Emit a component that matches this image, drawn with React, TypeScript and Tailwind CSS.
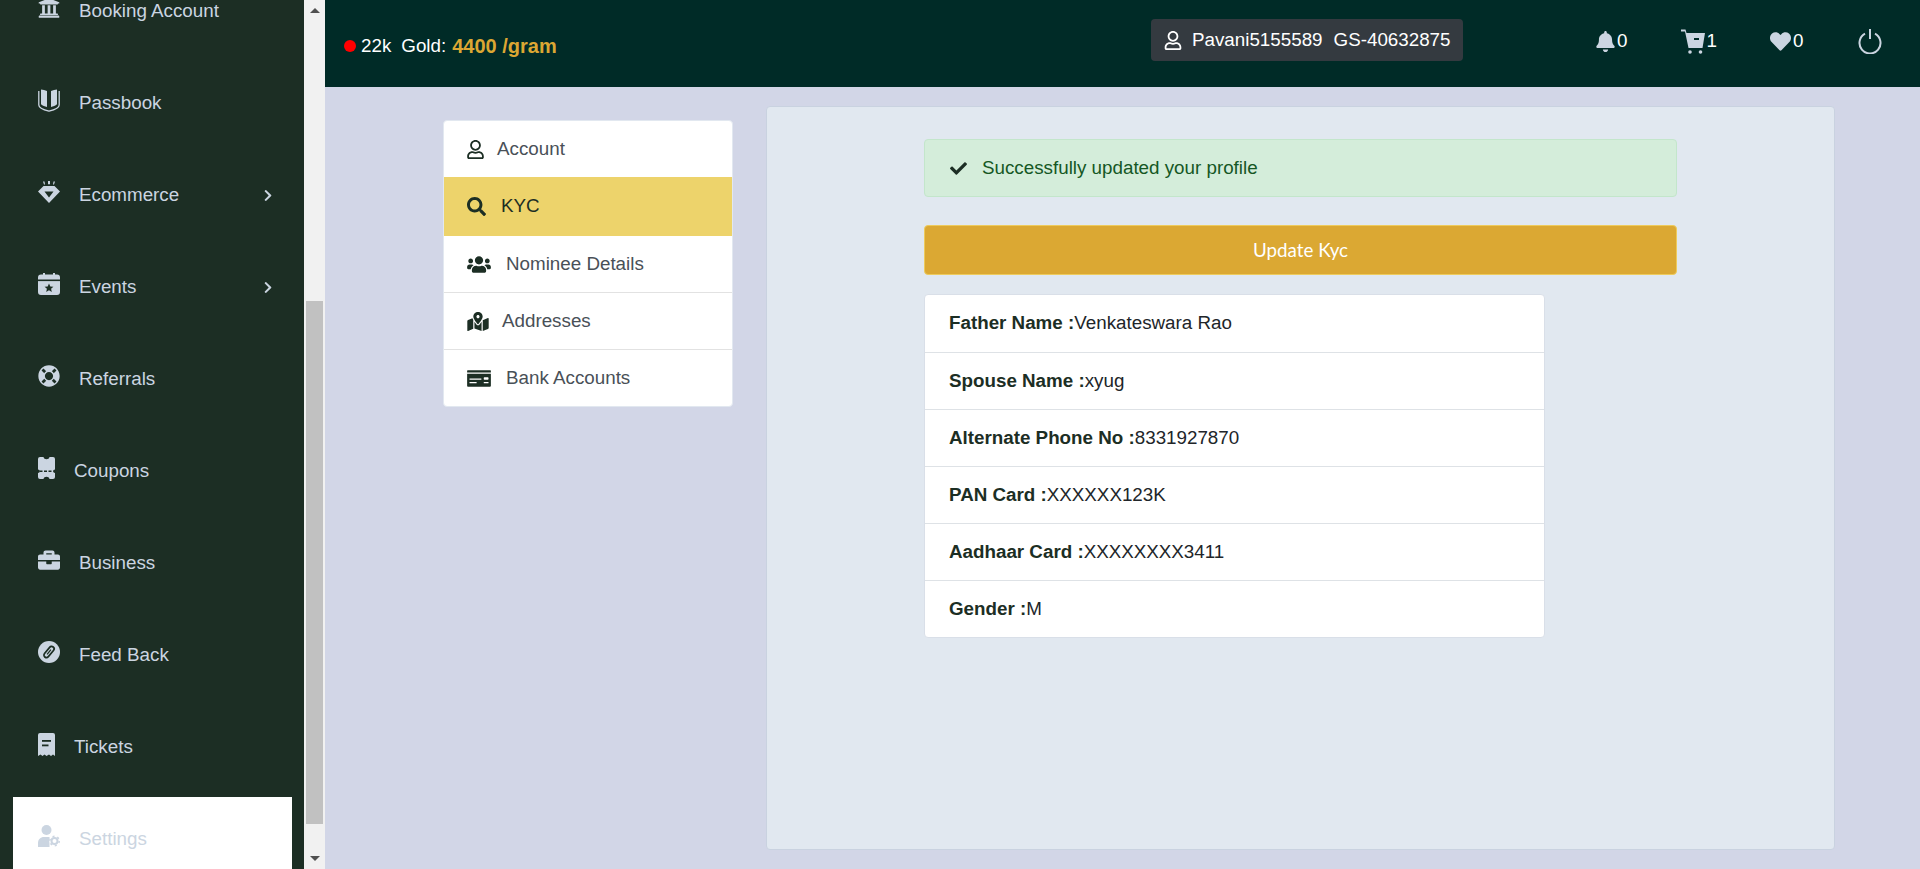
import {
  FaUniversity,
  FaLifeRing,
  FaBriefcase,
  FaChevronRight,
  FaRegUser,
  FaSearch,
  FaUsers,
  FaMapMarkedAlt,
  FaMoneyCheck,
  FaCheck,
  FaBell,
  FaHeart,
} from "react-icons/fa";

type IconProps = { className?: string };

const sidebarBg = "#1c2e24";

function PassbookIcon({ className }: IconProps) {
  return (
    <svg viewBox="0 0 22 23" className={className} fill="currentColor">
      <path d="M0.8 2v14c0 2.6 5 4.9 10.2 6.2C16.2 20.900 21.200 18.600 21.200 16V2" fill="none" stroke="currentColor" strokeWidth="1.300" />
      <path d="M3 0.500c2 0 4 .5 6 1.500v16c-2-.6-4.500-1.500-6-2.800zM19 0.500c-2 0-4 .5-6 1.500v16c2-.6 4.500-1.500 6-2.800z" />
    </svg>
  );
}

function GemIcon({ className }: IconProps) {
  return (
    <svg viewBox="0 0 22 22" className={className} fill="currentColor">
      <path d="M5 0.500l1.500 0 .5 3-1 0zM10 0h2v3.200h-2zM15.500 0.500l1.500 0-1 3-1 0z" />
      <path fillRule="evenodd" d="M5.500 5h11l5.500 5.500L11 22 0 10.500zM6.500 10.500h9L11 16.500z" />
    </svg>
  );
}

function CalendarStarIcon({ className }: IconProps) {
  return (
    <svg viewBox="0 0 22 22" className={className}>
      <path fill="currentColor" d="M3 1.500h2V0h2v1.500h8V0h2v1.500h2a3 3 0 0 1 3 3V19a3 3 0 0 1-3 3H3a3 3 0 0 1-3-3V4.500a3 3 0 0 1 3-3z" />
      <rect x="0" y="6.500" width="22" height="1.600" fill={sidebarBg} />
      <path fill={sidebarBg} d="M11 10.500l1.300 2.900 3.100.3-2.300 2.100.7 3.100-2.800-1.600-2.800 1.600.7-3.100-2.300-2.100 3.100-.3z" />
    </svg>
  );
}

function CouponIcon({ className }: IconProps) {
  return (
    <svg viewBox="0 0 17 22" className={className}>
      <path fill="currentColor" d="M2 0h3.500c.3 1.500 1.500 2.200 3 2.200S11.200 1.500 11.500 0H15a2 2 0 0 1 2 2v10.500a1.800 1.800 0 0 0 0 3.600V20a2 2 0 0 1-2 2h-3.500c-.3-1.500-1.500-2.200-3-2.200S5.800 20.500 5.500 22H2a2 2 0 0 1-2-2v-3.900a1.800 1.800 0 0 0 0-3.600V2a2 2 0 0 1 2-2z" />
      <path stroke={sidebarBg} strokeWidth="1.500" strokeDasharray="3 1.500" d="M1.500 14.300h14" />
    </svg>
  );
}

function FeedbackIcon({ className }: IconProps) {
  return (
    <svg viewBox="0 0 22 22" className={className}>
      <circle cx="11" cy="11" r="11" fill="currentColor" />
      <rect x="8.500" y="4.500" width="5" height="13" rx="2.500" fill="none" stroke={sidebarBg} strokeWidth="1.700" transform="rotate(40 11 11)" />
      <path stroke={sidebarBg} strokeWidth="1.300" d="M11 8v6" transform="rotate(40 11 11)" />
    </svg>
  );
}

function ReceiptIcon({ className }: IconProps) {
  return (
    <svg viewBox="0 0 17 23" className={className}>
      <path fill="currentColor" d="M2 0h13a2 2 0 0 1 2 2v21l-2-1.500-2 1.500-2-1.500-2.500 1.500-2-1.500-2 1.500-2-1.500-2.500 1.500V2a2 2 0 0 1 2-2z" />
      <rect x="4" y="7" width="9" height="1.800" fill={sidebarBg} />
      <rect x="4" y="11.500" width="6.500" height="1.800" fill={sidebarBg} />
    </svg>
  );
}

function UserGearIcon({ className }: IconProps) {
  return (
    <svg viewBox="0 0 22 22" className={className}>
      <circle cx="8.500" cy="5" r="5" fill="currentColor" />
      <path fill="currentColor" d="M0 22v-4c0-3.500 2.500-6 6-6h5.500v10z" />
      <circle cx="16.500" cy="16" r="5" fill="#ffffff" />
      <circle cx="16.500" cy="16" r="3" fill="none" stroke="currentColor" strokeWidth="2" />
      <circle cx="16.500" cy="16" r="4.700" fill="none" stroke="currentColor" strokeWidth="1.500" strokeDasharray="2 2.900" />
    </svg>
  );
}

function CartIcon({ className }: IconProps) {
  return (
    <svg viewBox="0 0 24 25" className={className}>
      <path fill="currentColor" d="M0 0.500h4.500L5.500 4H24l-2.500 15H7.500L4 2.500H0z" />
      <rect x="13" y="9" width="5" height="2" fill="#002b27" />
      <circle cx="9" cy="23" r="1.800" fill="currentColor" />
      <circle cx="19.500" cy="23" r="1.800" fill="currentColor" />
    </svg>
  );
}

function PowerIcon({ className }: IconProps) {
  return (
    <svg viewBox="0 0 24 25" className={className} fill="none" stroke="currentColor" strokeWidth="2">
      <path d="M7 4.700a10.500 10.500 0 1 0 10 0" />
      <path d="M12 0v10" />
    </svg>
  );
}

const menu = [
  { label: "Booking Account", icon: FaUniversity, size: "h-[22px] w-[22px]" },
  { label: "Passbook", icon: PassbookIcon, size: "h-[23px] w-[22px]" },
  { label: "Ecommerce", icon: GemIcon, size: "h-[22px] w-[22px]", arrow: true },
  { label: "Events", icon: CalendarStarIcon, size: "h-[22px] w-[22px]", arrow: true },
  { label: "Referrals", icon: FaLifeRing, size: "h-[22px] w-[22px]" },
  { label: "Coupons", icon: CouponIcon, size: "h-[22px] w-[17px]" },
  { label: "Business", icon: FaBriefcase, size: "h-[22px] w-[22px]" },
  { label: "Feed Back", icon: FeedbackIcon, size: "h-[22px] w-[22px]" },
  { label: "Tickets", icon: ReceiptIcon, size: "h-[23px] w-[17px]" },
];

const tabs = [
  { label: "Account", icon: FaRegUser, size: "h-[19px] w-[17px]", gap: "gap-[13px]", height: "h-[56px]" },
  { label: "KYC", icon: FaSearch, size: "h-[19px] w-[19px]", gap: "gap-[15px]", height: "h-[59px]", active: true },
  { label: "Nominee Details", icon: FaUsers, size: "h-[19px] w-[24px]", gap: "gap-[15px]", height: "h-[56px]" },
  { label: "Addresses", icon: FaMapMarkedAlt, size: "h-[19px] w-[22px]", gap: "gap-[13px]", height: "h-[57px]" },
  { label: "Bank Accounts", icon: FaMoneyCheck, size: "h-[19px] w-[24px]", gap: "gap-[15px]", height: "h-[57px]" },
];

const kyc = [
  ["Father Name :", "Venkateswara Rao"],
  ["Spouse Name :", "xyug"],
  ["Alternate Phone No :", "8331927870"],
  ["PAN Card :", "XXXXXX123K"],
  ["Aadhaar Card :", "XXXXXXXX3411"],
  ["Gender :", "M"],
];

export default function App() {
  return (
    <div className="flex h-[869px] overflow-hidden bg-[#d2d6e7] font-['Liberation_Sans',sans-serif] text-[18.8px]">
      {/* Sidebar */}
      <div className="w-[304px] shrink-0 overflow-hidden bg-[#1c2e24] pl-[13px] pr-[12px]">
        <div className="-mt-[31px] flex flex-col gap-[8px]">
          {menu.map((item) => (
            <div key={item.label} className="flex h-[84px] items-center pl-[25px] pr-[19px] text-[#cbd5e1]">
              <item.icon className={`mr-[19px] shrink-0 -translate-y-[3px] ${item.size}`} />
              <span>{item.label}</span>
              {item.arrow && <FaChevronRight className="ml-auto h-[13px] w-[10px]" />}
            </div>
          ))}
          <div className="flex h-[84px] items-center bg-white pl-[25px] text-[#cbd5e1]">
            <UserGearIcon className="mr-[19px] h-[22px] w-[22px] shrink-0 -translate-y-[3px]" />
            <span>Settings</span>
          </div>
        </div>
      </div>

      {/* Scrollbar */}
      <div className="flex w-[21px] shrink-0 flex-col bg-[#f1f1f1]">
        <div className="flex h-[21px] items-center justify-center">
          <div className="h-0 w-0 border-x-[5px] border-b-[5px] border-x-transparent border-b-[#505050]" />
        </div>
        <div className="mx-[2px] mt-[280px] h-[523px] bg-[#c1c1c1]" />
        <div className="mt-auto flex h-[21px] items-center justify-center">
          <div className="h-0 w-0 border-x-[5px] border-t-[5px] border-x-transparent border-t-[#505050]" />
        </div>
      </div>

      <div className="flex min-w-0 flex-1 flex-col">
        {/* Header */}
        <div className="flex h-[87px] shrink-0 items-center bg-[#002b27] text-white">
          <div className="flex w-[826px] items-center pl-[19px] pt-[5px]">
            <span className="mr-[5px] h-[12px] w-[12px] rounded-full bg-[#ff0000]" />
            <span>22k</span>
            <span className="ml-[10px]">Gold:</span>
            <span className="ml-[6px] text-[20px] font-bold text-[#dca733]">4400 /gram</span>
          </div>
          <div className="-mt-[7px] flex h-[42px] w-[312px] items-center gap-[10px] rounded-[4px] bg-[#343a40] pl-[13px]">
            <FaRegUser className="h-[19px] w-[18px]" />
            <span>Pavani5155589</span>
            <span className="ml-[1px]">GS-40632875</span>
          </div>
          <div className="ml-[133px] flex items-center text-[#cbd5e1]">
            <FaBell className="-mt-[5px] h-[21px] w-[19px]" />
            <span className="ml-[2px] -mt-[5px] text-white">0</span>
            <CartIcon className="-mt-[5px] ml-[54px] h-[25px] w-[24px]" />
            <span className="ml-[1px] -mt-[5px] text-white">1</span>
            <FaHeart className="-mt-[5px] ml-[52px] h-[21px] w-[23px]" />
            <span className="ml-[1px] -mt-[5px] text-white">0</span>
            <PowerIcon className="-mt-[5px] ml-[55px] h-[25px] w-[24px]" />
          </div>
        </div>

        {/* Main */}
        <div className="flex flex-1 items-start pl-[118px] pt-[19px]">
          <div className="mt-[14px] w-[290px] overflow-hidden rounded-[4px] border border-[#e2e8f0] bg-white text-[#495057]">
            {tabs.map((tab, i) => (
              <div
                key={tab.label}
                className={`flex items-center pl-[23px] ${tab.gap} ${tab.height} ${
                  tab.active ? "bg-[#edd36b] text-[#1c2e24]" : ""
                } ${i > 2 ? "border-t border-[#e2e2e2]" : ""}`}
              >
                <tab.icon className={`shrink-0 text-[#1c2e24] ${tab.size}`} />
                <span>{tab.label}</span>
              </div>
            ))}
          </div>

          <div className="ml-[33px] h-[744px] w-[1069px] rounded-[4px] border border-[#c9d2e0] bg-[#e1e8f0] pl-[157px] pt-[32px]">
            <div className="flex h-[58px] w-[753px] items-center gap-[14px] rounded-[4px] border border-[#c3e6cb] bg-[#d4edda] pl-[24px] text-[#155724]">
              <FaCheck className="h-[17px] w-[19px] text-[#1c2e24]" />
              <span>Successfully updated your profile</span>
            </div>
            <div className="mt-[28px] flex h-[50px] w-[753px] items-center justify-center rounded-[4px] border border-[#eecb5c] bg-[#dba833] font-['Lato',sans-serif] text-white">
              Update Kyc
            </div>
            <div className="mt-[19px] w-[621px] overflow-hidden rounded-[4px] border border-[#d9dfe8] bg-white text-[#212529]">
              {kyc.map(([name, value], i) => (
                <div key={name} className={`flex h-[57px] items-center pl-[24px] ${i > 0 ? "border-t border-[#dee2e6]" : ""}`}>
                  <span className="font-bold text-[#1c2e24]">{name}</span>
                  <span>{value}</span>
                </div>
              ))}
            </div>
          </div>
        </div>
      </div>
    </div>
  );
}
